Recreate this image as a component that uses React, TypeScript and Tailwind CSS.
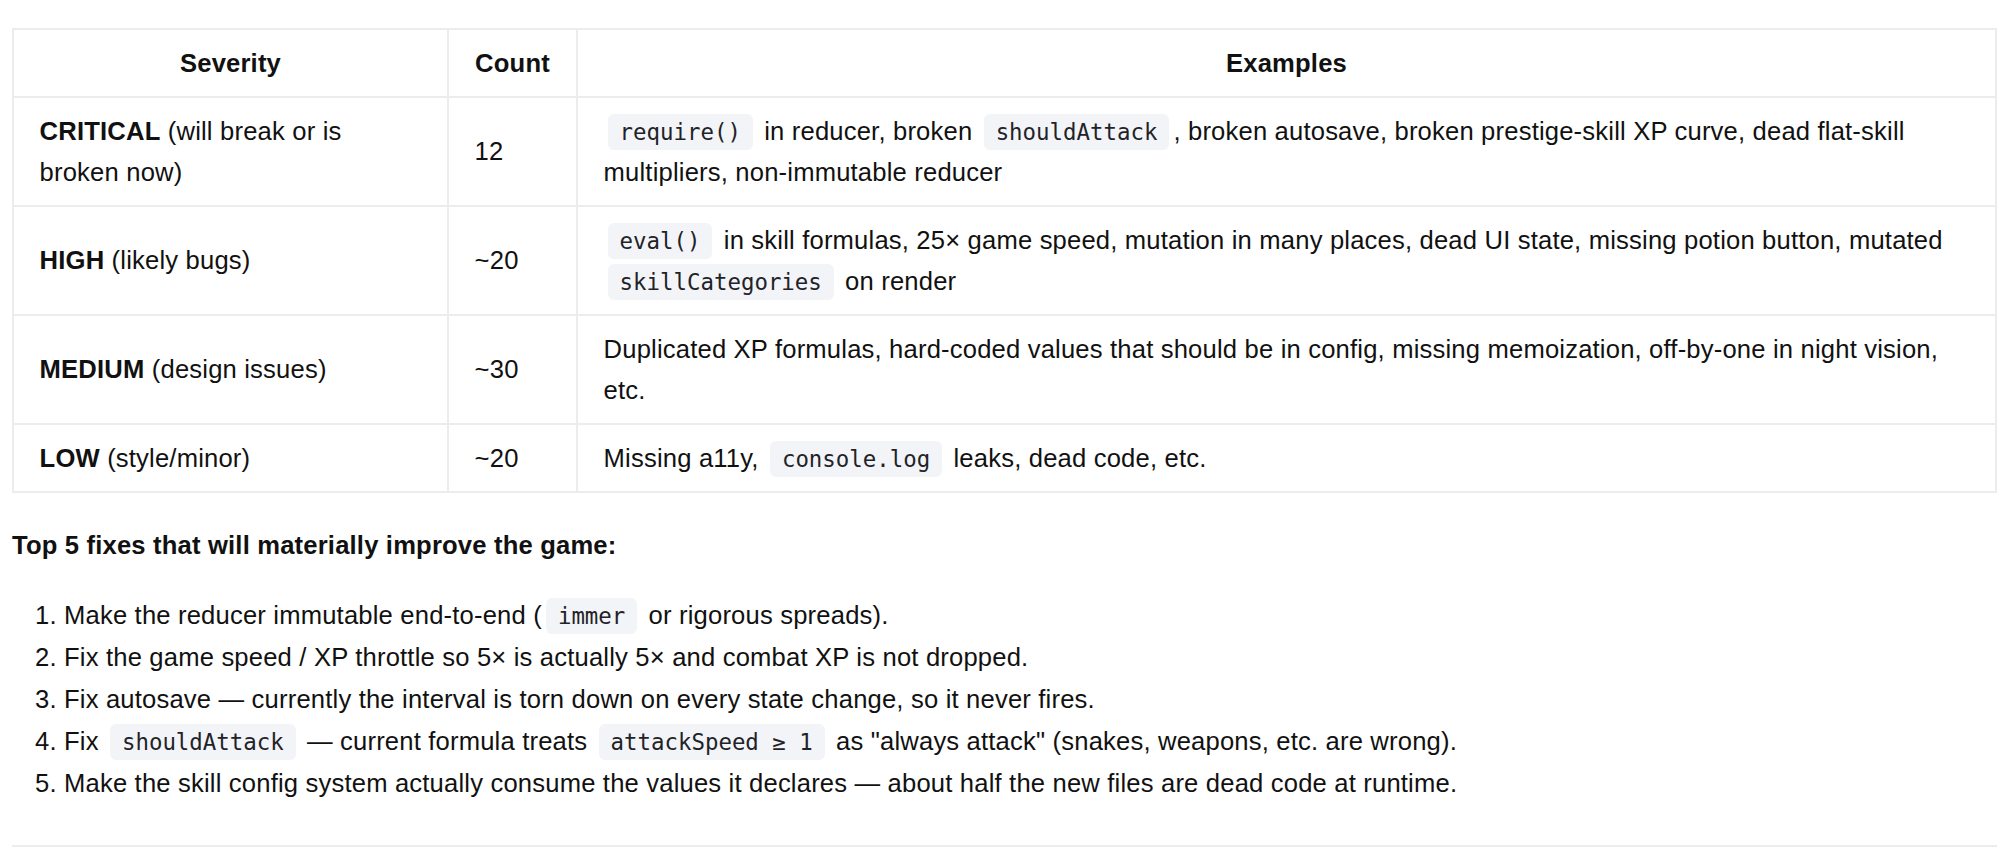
import React from 'react';

function Code({ children }: { children: React.ReactNode }) {
  return (
    <code className="mx-[4px] rounded-[6px] bg-[#f2f4f7] px-[12px] py-[5px] font-['DejaVu_Sans_Mono',monospace] text-[22.4px] leading-none tracking-normal text-[#1f2328]">
      {children}
    </code>
  );
}

const rows = [
  {
    level: 'CRITICAL',
    note: '(will break or is broken now)',
    count: '12',
    examples: (
      <>
        <Code>require()</Code> in reducer, broken <Code>shouldAttack</Code>, broken autosave, broken prestige-skill XP
        curve, dead flat-skill multipliers, non-immutable reducer
      </>
    ),
  },
  {
    level: 'HIGH',
    note: '(likely bugs)',
    count: '~20',
    examples: (
      <>
        <Code>eval()</Code> in skill formulas, 25× game speed, mutation in many places, dead UI state, missing potion
        button, mutated <Code>skillCategories</Code> on render
      </>
    ),
  },
  {
    level: 'MEDIUM',
    note: '(design issues)',
    count: '~30',
    examples: (
      <>
        Duplicated XP formulas, hard-coded values that should be in config, missing memoization, off-by-one in night
        vision,
        <br />
        etc.
      </>
    ),
  },
  {
    level: 'LOW',
    note: '(style/minor)',
    count: '~20',
    examples: (
      <>
        Missing a11y, <Code>console.log</Code> leaks, dead code, etc.
      </>
    ),
  },
];

const cell = 'border-2 border-[#ececec] px-[25.6px] py-[12.5px]';

export default function App() {
  return (
    <div className="min-h-screen bg-white pt-[28px] pl-[12px] pr-[15px] font-['Liberation_Sans',Arial,sans-serif] text-[25.6px] leading-[41px] tracking-[0.18px] text-[#111]">
      <table className="w-full table-fixed border-collapse">
        <thead>
          <tr>
            <th className={`w-[435px] ${cell} text-center font-bold`}>Severity</th>
            <th className={`w-[129px] ${cell} text-center font-bold`}>Count</th>
            <th className={`${cell} text-center font-bold`}>Examples</th>
          </tr>
        </thead>
        <tbody>
          {rows.map((r) => (
            <tr key={r.level}>
              <td className={`${cell} align-middle`}>
                <strong className="font-bold">{r.level}</strong> {r.note}
              </td>
              <td className={`${cell} align-middle`}>{r.count}</td>
              <td className={`${cell} align-middle`}>{r.examples}</td>
            </tr>
          ))}
        </tbody>
      </table>

      <p className="mt-[32px] font-bold">Top 5 fixes that will materially improve the game:</p>

      <ol className="mt-[29px] list-decimal pl-[52px] leading-[41.9px]">
        <li>
          Make the reducer immutable end-to-end (<Code>immer</Code> or rigorous spreads).
        </li>
        <li>Fix the game speed / XP throttle so 5× is actually 5× and combat XP is not dropped.</li>
        <li>Fix autosave — currently the interval is torn down on every state change, so it never fires.</li>
        <li>
          Fix <Code>shouldAttack</Code> — current formula treats <Code>attackSpeed ≥ 1</Code> as "always attack"
          (snakes, weapons, etc. are wrong).
        </li>
        <li>
          Make the skill config system actually consume the values it declares — about half the new files are dead
          code at runtime.
        </li>
      </ol>

      <hr className="mt-[40px] border-0 border-t-2 border-[#ececec]" />
    </div>
  );
}
